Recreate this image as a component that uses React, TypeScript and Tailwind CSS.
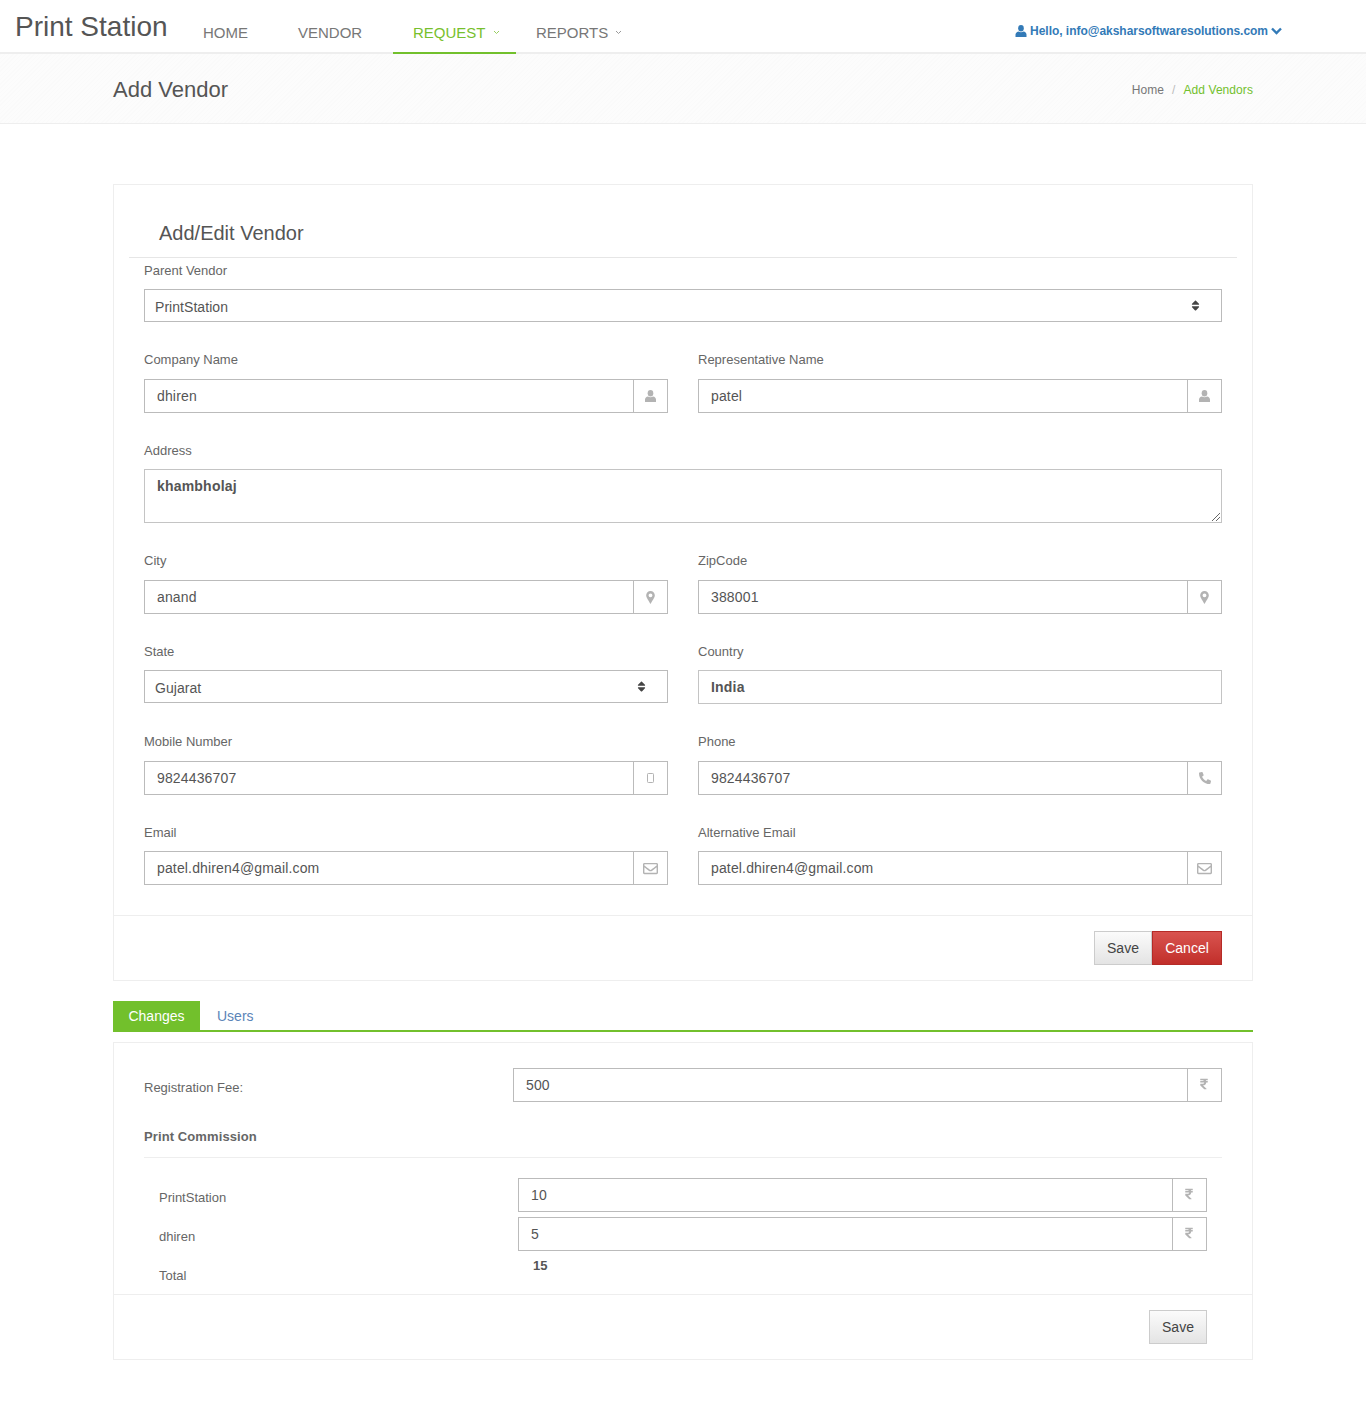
import React from "react";
import { FaPhone, FaRegEnvelope, FaRupeeSign, FaSort } from "react-icons/fa";

const border = "border border-[#bbbbbb]";

function Label({ children, tight }: { children: React.ReactNode; tight?: boolean }) {
  return (
    <div className={`h-[20px] text-[13px] leading-[20px] text-[#666666] ${tight ? "mb-[8px]" : "mb-[9px]"}`}>
      {children}
    </div>
  );
}

function IconInput({ value, icon }: { value: string; icon: React.ReactNode }) {
  return (
    <div className={`flex h-[34px] ${border} bg-white`}>
      <div className="flex-1 pl-3 text-[14px] leading-[32px] tracking-[0.15px] text-[#555555]">{value}</div>
      <div className="w-[34px] shrink-0 border-l border-[#bbbbbb] flex items-center justify-center text-[#b3b3b3] text-[13px]">{icon}</div>
    </div>
  );
}

function SelectBox({ value }: { value: string }) {
  return (
    <div className={`flex items-center justify-between h-[33px] ${border} bg-white pl-[10px] pr-[19px]`}>
      <span className="text-[14px] leading-[20px] pt-[3px] tracking-[0.05px] text-[#555555]">{value}</span>
      <FaSort className="text-[#444444] text-[13px]" />
    </div>
  );
}

function Field({ label, tight, children }: { label: string; tight?: boolean; children: React.ReactNode }) {
  return (
    <div>
      <Label tight={tight}>{label}</Label>
      {children}
    </div>
  );
}

function Row({ children }: { children: React.ReactNode }) {
  return <div className="grid grid-cols-2 gap-[30px] mt-[28px]">{children}</div>;
}

function Btn({ children, className }: { children: React.ReactNode; className: string }) {
  return <div className={`h-[34px] flex items-center justify-center text-[14px] border ${className}`}>{children}</div>;
}

function UserIcon({ w = 11, h = 12 }: { w?: number; h?: number }) {
  return (
    <svg width={w} height={h} viewBox="0 0 11 12" fill="currentColor">
      <ellipse cx="5.5" cy="3.2" rx="2.8" ry="3.2" />
      <path d="M0 12 V9.6 C0 8 1.4 6.9 3 6.6 C4.4 7.5 6.6 7.5 8 6.6 C9.6 6.9 11 8 11 9.6 V12 Z" />
    </svg>
  );
}

function PinIcon() {
  return (
    <svg className="-ml-[1px]" width="9" height="13" viewBox="0 0 8 12">
      <path fillRule="evenodd" fill="currentColor" d="M4 0 C6.2 0 8 1.8 8 4 C8 6 5.4 9.6 4 12 C2.6 9.6 0 6 0 4 C0 1.8 1.8 0 4 0 Z M4 2.2 A1.8 1.8 0 1 0 4 5.8 A1.8 1.8 0 1 0 4 2.2 Z" />
    </svg>
  );
}

function MobileIcon() {
  return (
    <svg width="7" height="10" viewBox="0 0 7 10" fill="none" stroke="currentColor" strokeWidth="1">
      <rect x="0.5" y="0.5" width="6" height="9" rx="0.8" />
    </svg>
  );
}

function NavChevron() {
  return (
    <svg className="ml-[7px] mt-[7px]" width="7" height="5" viewBox="0 0 7 5" fill="none" stroke="currentColor" strokeWidth="1" opacity="0.75">
      <path d="M1 1 L3.5 3.5 L6 1" />
    </svg>
  );
}

const saveCls = "border-[#cccccc] text-[#444444] bg-gradient-to-b from-[#fbfbfb] to-[#e4e4e4]";
const u = <UserIcon />;
const pin = <PinIcon />;
const mail = <FaRegEnvelope className="text-[15px]" />;
const rupee = <FaRupeeSign className="text-[12px] -mt-[2px] -ml-[1px]" />;

export default function App() {
  return (
    <div className="bg-white min-h-[1410px] font-['Liberation_Sans',Arial,sans-serif] text-[#555555]">
      <header className="h-[54px] border-b-2 border-[#eeeeee] flex items-start">
        <div className="pl-[15px] pt-[9px] w-[203px] text-[28px] leading-[36px] text-[#555555]">Print Station</div>
        <nav className="flex text-[15px] text-[#777777] h-[54px]">
          <div className="w-[95px] pt-[23px] leading-[20px]">HOME</div>
          <div className="w-[95px] pt-[23px] leading-[20px]">VENDOR</div>
          <div className="w-[123px] pl-[20px] pt-[23px] leading-[20px] text-[#77c02d] border-b-2 border-[#72c02c] flex items-start">
            REQUEST<NavChevron />
          </div>
          <div className="pl-[20px] pt-[23px] leading-[20px] flex items-start">
            REPORTS<NavChevron />
          </div>
        </nav>
        <div className="ml-auto mr-[84px] mt-[22px] flex items-center text-[12px] leading-[18px] font-bold text-[#337ab7]">
          <span className="mr-[3px] -mt-[1px]"><UserIcon w={12} h={12} /></span>
          <span className="tracking-[-0.03px]">Hello, info@aksharsoftwaresolutions.com</span>
          <svg className="ml-[3px]" width="11" height="8" viewBox="0 0 11 8" fill="none" stroke="currentColor" strokeWidth="2.4">
            <path d="M1 1.5 L5.5 6 L10 1.5" />
          </svg>
        </div>
      </header>

      <div className="h-[70px] border-b border-[#eeeeee] bg-[#fbfbfb] bg-[repeating-linear-gradient(135deg,#fafafa_0px,#fafafa_1px,#fcfcfc_1px,#fcfcfc_3px)]">
        <div className="w-[1140px] mx-auto flex items-center justify-between h-[69px] pt-[2px]">
          <h1 className="text-[22px] text-[#555555]">Add Vendor</h1>
          <div className="text-[12px] flex tracking-[0.07px]">
            <span className="text-[#777777]">Home</span>
            <span className="text-[#bbbbbb] mx-[8px]">/</span>
            <span className="text-[#72c02c]">Add Vendors</span>
          </div>
        </div>
      </div>

      <main className="w-[1140px] mx-auto pt-[60px]">
        <section className="border border-[#eeeeee] h-[797px] flex flex-col">
          <div className="mx-[15px] mt-[31px] h-[42px] border-b border-[#e6e6e6] pl-[30px] text-[20px] leading-[34px] text-[#555555]">Add/Edit Vendor</div>
          <div className="px-[30px] flex-1">
            <div className="mt-[3px]">
              <Field label="Parent Vendor" tight><SelectBox value="PrintStation" /></Field>
            </div>
            <Row>
              <Field label="Company Name"><IconInput value="dhiren" icon={u} /></Field>
              <Field label="Representative Name"><IconInput value="patel" icon={u} /></Field>
            </Row>
            <div className="mt-[28px]">
              <Label tight>Address</Label>
              <div className="relative h-[54px] border border-[#c4c4c4] pl-3 pt-[6px] text-[14px] leading-[20px] font-bold tracking-[0.2px] text-[#555555]">
                khambholaj
                <svg className="absolute right-[1px] bottom-[1px]" width="9" height="9" viewBox="0 0 9 9" stroke="#666666" strokeWidth="1" fill="none">
                  <path d="M1 9 L9 1 M5 9 L9 5" />
                </svg>
              </div>
            </div>
            <Row>
              <Field label="City"><IconInput value="anand" icon={pin} /></Field>
              <Field label="ZipCode"><IconInput value="388001" icon={pin} /></Field>
            </Row>
            <Row>
              <Field label="State" tight><SelectBox value="Gujarat" /></Field>
              <Field label="Country" tight>
                <div className="h-[34px] border border-[#c4c4c4] pl-3 text-[14px] leading-[32px] font-bold tracking-[0.2px] text-[#555555]">India</div>
              </Field>
            </Row>
            <Row>
              <Field label="Mobile Number"><IconInput value="9824436707" icon={<MobileIcon />} /></Field>
              <Field label="Phone"><IconInput value="9824436707" icon={<FaPhone className="scale-x-[-1] text-[12px]" />} /></Field>
            </Row>
            <Row>
              <Field label="Email" tight><IconInput value="patel.dhiren4@gmail.com" icon={mail} /></Field>
              <Field label="Alternative Email" tight><IconInput value="patel.dhiren4@gmail.com" icon={mail} /></Field>
            </Row>
          </div>
          <div className="h-[65px] border-t border-[#eeeeee] pt-[15px] pr-[30px] flex justify-end">
            <Btn className={`w-[58px] ${saveCls}`}>Save</Btn>
            <Btn className="w-[70px] border-[#b52b27] text-white bg-gradient-to-b from-[#d9534f] to-[#c12e2a]">Cancel</Btn>
          </div>
        </section>

        <div className="mt-[20px] h-[31px] border-b-2 border-[#72c02c] flex text-[14px] leading-[29px]">
          <div className="w-[87px] bg-[#72c02c] text-white text-center pt-[1px]">Changes</div>
          <div className="pl-[17px] pt-[1px] text-[#5b85b8]">Users</div>
        </div>

        <section className="mt-[10px] border border-[#eeeeee] h-[318px] flex flex-col">
          <div className="flex-1 px-[30px] pt-[25px]">
            <div className="flex">
              <div className="w-[369px] text-[13px] leading-[20px] text-[#666666] pt-[10px]">Registration Fee:</div>
              <div className="flex-1"><IconInput value="500" icon={rupee} /></div>
            </div>
            <div className="mt-[25px] h-[31px] border-b border-[#eeeeee] text-[13px] leading-[20px] font-bold tracking-[0.1px] text-[#666666]">Print Commission</div>
            <div className="px-[15px] pt-[20px]">
              <div className="flex h-[34px]">
                <div className="w-[359px] text-[13px] leading-[20px] text-[#666666] pt-[10px]">PrintStation</div>
                <div className="flex-1"><IconInput value="10" icon={rupee} /></div>
              </div>
              <div className="flex h-[34px] mt-[5px]">
                <div className="w-[359px] text-[13px] leading-[20px] text-[#666666] pt-[10px]">dhiren</div>
                <div className="flex-1"><IconInput value="5" icon={rupee} /></div>
              </div>
              <div className="flex mt-[5px]">
                <div className="w-[374px] text-[13px] leading-[20px] text-[#666666] pt-[10px]">Total</div>
                <div className="text-[13px] leading-[20px] font-bold text-[#555555]">15</div>
              </div>
            </div>
          </div>
          <div className="h-[65px] border-t border-[#eeeeee] pt-[15px] pr-[45px] flex justify-end">
            <Btn className={`w-[58px] ${saveCls}`}>Save</Btn>
          </div>
        </section>
      </main>
    </div>
  );
}
